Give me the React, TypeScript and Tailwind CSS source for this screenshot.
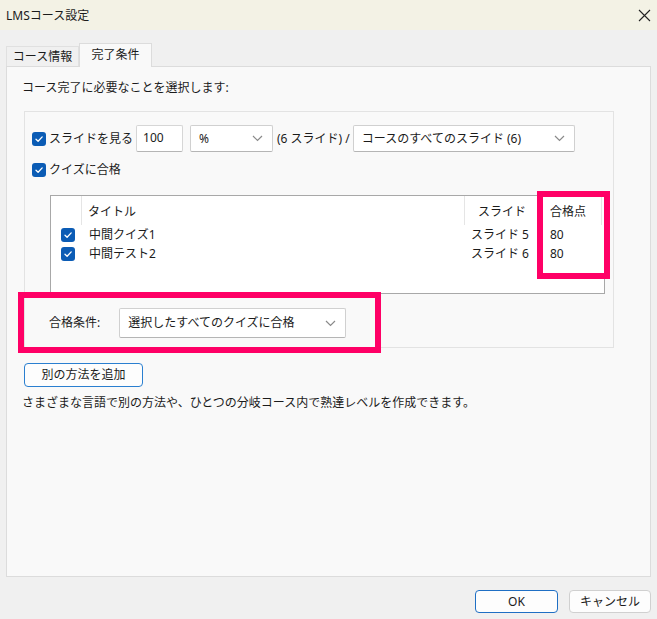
import React from "react";

const FONT = '"Noto Sans", "Noto Sans CJK JP", sans-serif';

function Check() {
  return (
    <span className="inline-flex h-[14px] w-[14px] shrink-0 items-center justify-center rounded-[3px] bg-[#0b5cb5]">
      <svg width="10" height="10" viewBox="0 0 10 10">
        <path d="M2 5.2 L4.1 7.3 L8.2 2.9" fill="none" stroke="#ffffff" strokeWidth="1.3" strokeLinecap="round" strokeLinejoin="round" />
      </svg>
    </span>
  );
}

function Chevron() {
  return (
    <svg width="11" height="7" viewBox="0 0 11 7" className="shrink-0">
      <path d="M1 1 L5.5 5.5 L10 1" fill="none" stroke="#8a8a8a" strokeWidth="1.2" />
    </svg>
  );
}

function Select({ label, className }: { label: string; className: string }) {
  return (
    <div className={"flex items-center justify-between border border-[#d0d0d0] border-b-[#b5b5b5] bg-white pl-[8px] pr-[9px] rounded-[2px] " + className}>
      <span className="text-[12px] leading-[16px] text-[#1b1b1b]">{label}</span>
      <Chevron />
    </div>
  );
}

export default function App() {
  return (
    <div className="relative h-[619px] w-[657px] overflow-hidden bg-[#f0f0f0] text-[#1b1b1b]" style={{ fontFamily: FONT }}>
      {/* title bar */}
      <div className="flex h-[30px] items-center justify-between bg-[#f3f2e5] pl-[6px] pr-[4px]">
        <span className="text-[12px] leading-[16px] pt-[1px]">LMSコース設定</span>
        <svg width="13" height="13" viewBox="0 0 13 13" className="mr-[2px]">
          <path d="M1 1 L12 12 M12 1 L1 12" stroke="#222" strokeWidth="1.1" />
        </svg>
      </div>

      {/* tabs */}
      <div className="mt-[13px] flex h-[23px] items-end pl-[6px]">
        <div className="flex h-[20px] w-[73px] items-center justify-center border border-b-0 border-[#e0e0e0] bg-[#f0f0f0] text-[12px] leading-[16px]">
          コース情報
        </div>
        <div className="relative z-10 -mb-[1px] flex h-[24px] w-[73px] items-center justify-center border border-b-0 border-[#dcdcdc] bg-[#f9f9f9] text-[12px] leading-[16px] pb-[2px]">
          完了条件
        </div>
      </div>

      {/* panel */}
      <div className="ml-[6px] h-[511px] w-[645px] border border-[#dcdcdc] bg-[#f9f9f9]">
        <div className="ml-[15px] mt-[13px] text-[12px] leading-[16px]">コース完了に必要なことを選択します:</div>

        {/* group box */}
        <div className="ml-[17px] mt-[15px] h-[237px] w-[590px] border border-[#e3e3e3] bg-[#f9f9f9]">
          {/* row 1 */}
          <div className="ml-[7px] mt-[13px] flex h-[27px] items-center">
            <Check />
            <span className="ml-[3px] text-[12px] leading-[16px]">スライドを見る</span>
            <div className="ml-[3px] flex h-[27px] w-[47px] shrink-0 items-start border border-[#d6d6d6] border-b-[#b5b5b5] bg-white pl-[6px] pt-[4px] text-[12px] leading-[16px] rounded-[2px]">
              100
            </div>
            <Select label="%" className="ml-[7px] h-[27px] w-[83px] shrink-0" />
            <span className="ml-[4px] whitespace-nowrap text-[12px] leading-[16px]">(6 スライド) /</span>
            <Select label="コースのすべてのスライド (6)" className="ml-[3px] h-[27px] w-[222px] shrink-0" />
          </div>

          {/* row 2 */}
          <div className="ml-[7px] mt-[8px] flex h-[20px] items-center">
            <Check />
            <span className="ml-[3px] text-[12px] leading-[16px]">クイズに合格</span>
          </div>

          {/* list */}
          <div className="ml-[25px] mt-[15px] h-[99px] w-[555px] border border-[#a8a8a8] bg-white">
            <div className="flex h-[29px] items-stretch">
              <div className="w-[31px] border-r border-[#e5e5e5]" />
              <div className="flex w-[383px] items-center border-r border-[#e5e5e5] pl-[6px] pt-[3px] text-[12px] leading-[16px]">タイトル</div>
              <div className="flex w-[72px] items-center justify-end pr-[11px] pt-[3px] text-[12px] leading-[16px]">スライド</div>
              <div className="flex w-[65px] items-center border-r border-[#e5e5e5] pl-[13px] pt-[3px] text-[12px] leading-[16px]">合格点</div>
            </div>
            {[
              ["中間クイズ1", "スライド 5", "80"],
              ["中間テスト2", "スライド 6", "80"],
            ].map(([t, s, p]) => (
              <div key={t} className="flex h-[19px] items-center">
                <div className="flex w-[31px] justify-center pl-[2px]">
                  <Check />
                </div>
                <div className="w-[383px] pl-[7px] text-[12px] leading-[16px]">{t}</div>
                <div className="w-[72px] pr-[8px] text-right text-[12px] leading-[16px]">{s}</div>
                <div className="w-[65px] pl-[13px] text-[12px] leading-[16px]">{p}</div>
              </div>
            ))}
          </div>

          {/* condition */}
          <div className="mt-[14px] flex h-[30px] items-center pl-[24px]">
            <span className="text-[12px] leading-[16px]">合格条件:</span>
            <Select label="選択したすべてのクイズに合格" className="ml-[19px] h-[30px] w-[227px]" />
          </div>
        </div>

        {/* add button */}
        <div className="ml-[17px] mt-[15px] flex h-[24px] w-[119px] items-center justify-center rounded-[4px] border border-[#2a7fd0] bg-[#fdfdfd] text-[12px] leading-[16px]">
          別の方法を追加
        </div>
        <div className="ml-[15px] mt-[8px] text-[12px] leading-[16px]">
          さまざまな言語で別の方法や、ひとつの分岐コース内で熟達レベルを作成できます。
        </div>
      </div>

      {/* footer */}
      <div className="mt-[13px] flex justify-end gap-[11px] pr-[6px]">
        <div className="flex h-[23px] w-[83px] items-center justify-center rounded-[4px] border border-[#1f6fc4] bg-[#fdfdfd] text-[12px] leading-[16px]">
          OK
        </div>
        <div className="flex h-[23px] w-[82px] items-center justify-center rounded-[4px] border border-[#d0d0d0] bg-[#fdfdfd] text-[12px] leading-[16px]">
          キャンセル
        </div>
      </div>

      {/* annotation highlights */}
      <div className="absolute left-[537px] top-[191px] h-[88px] w-[73px] border-[6px] border-[#ff0066]" />
      <div className="absolute left-[18px] top-[292px] h-[61px] w-[363px] border-[6px] border-[#ff0066]" />
    </div>
  );
}
